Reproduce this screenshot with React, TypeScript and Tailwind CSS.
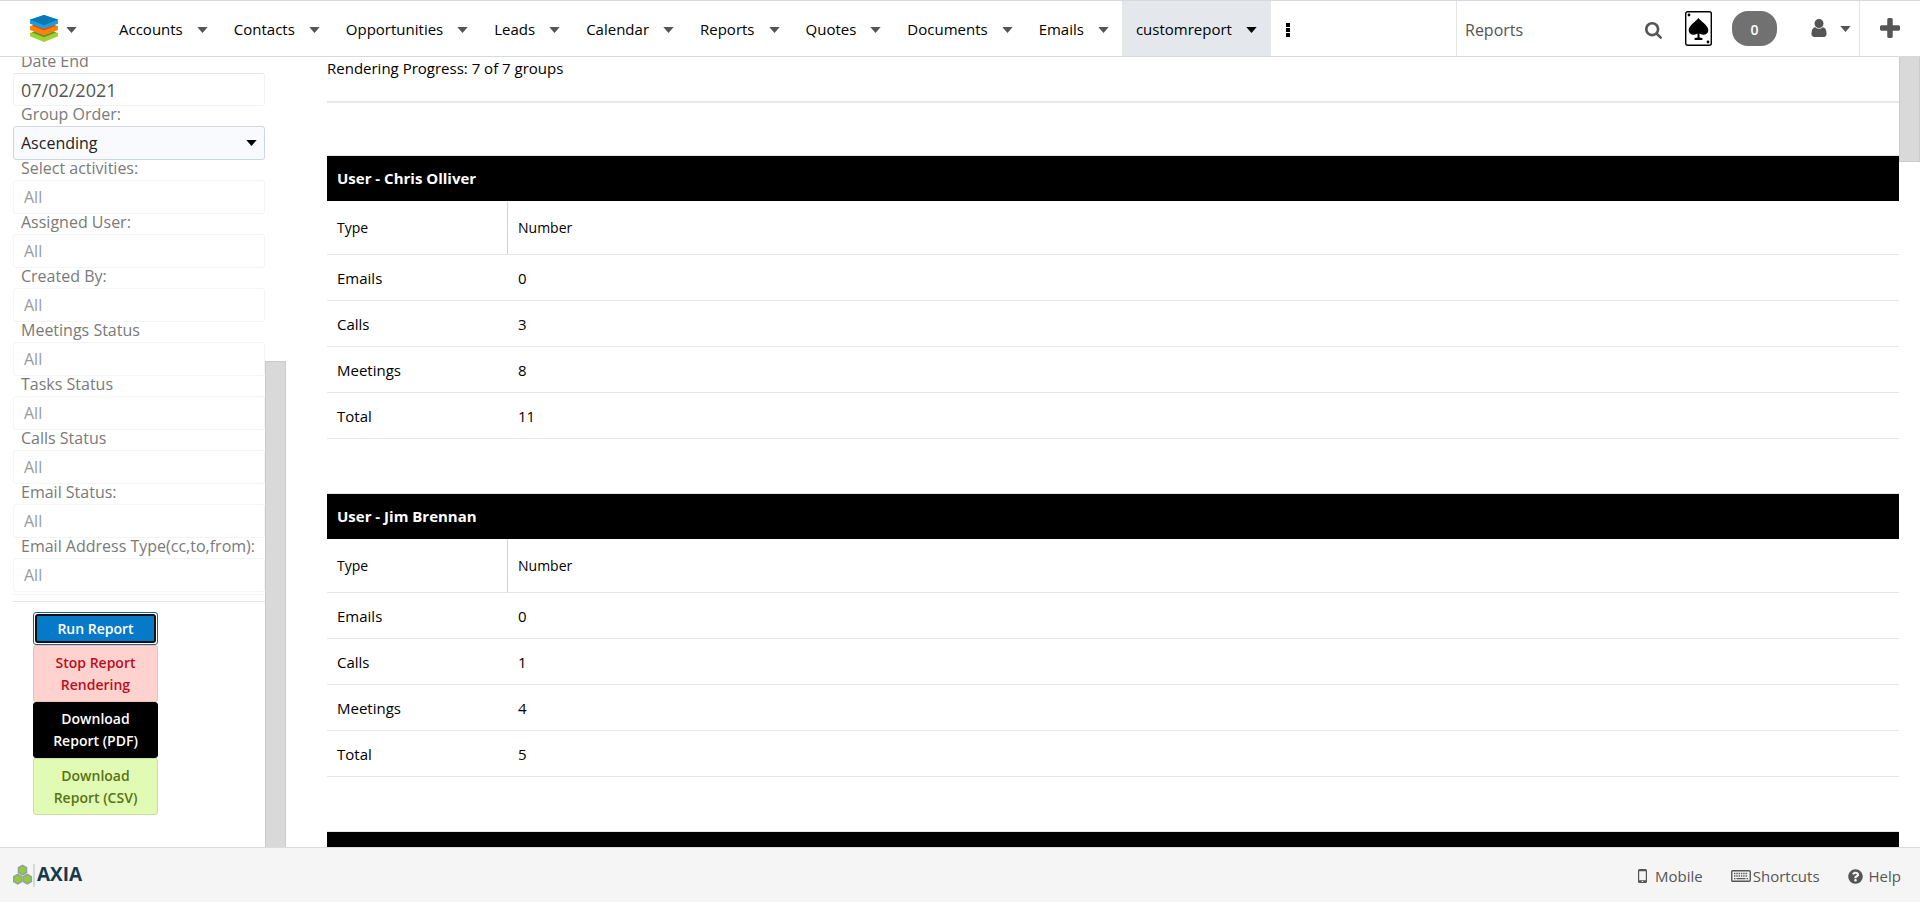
import { FaQuestionCircle } from "react-icons/fa";

const modules = ["Accounts", "Contacts", "Opportunities", "Leads", "Calendar", "Reports", "Quotes", "Documents", "Emails", "customreport"];

const filters = [
  "Select activities:",
  "Assigned User:",
  "Created By:",
  "Meetings Status",
  "Tasks Status",
  "Calls Status",
  "Email Status:",
  "Email Address Type(cc,to,from):",
];

const groups = [
  { user: "Chris Olliver", rows: [["Emails", 0], ["Calls", 3], ["Meetings", 8], ["Total", 11]] },
  { user: "Jim Brennan", rows: [["Emails", 0], ["Calls", 1], ["Meetings", 4], ["Total", 5]] },
  { user: "", rows: [] },
];

function Caret({ className = "" }: { className?: string }) {
  return (
    <svg viewBox="0 0 11 6" className={`h-[6px] w-[11px] shrink-0 ${className}`} fill="currentColor" aria-hidden="true">
      <path d="M0.3 0h10.4L5.5 6z" />
    </svg>
  );
}

function SearchIcon() {
  return (
    <svg viewBox="64 128 1664 1664" className="mt-[3px] size-[17px]" fill="currentColor" aria-hidden="true">
      <path d="M1216 832q0-185-131.500-316.500t-316.500-131.500-316.500 131.500-131.500 316.500 131.500 316.500 316.500 131.500 316.500-131.500 131.500-316.500zm512 832q0 52-38 90t-90 38q-54 0-90-38l-343-342q-179 124-399 124-143 0-273.500-55.500t-225-150-150-225-55.500-273.500 55.500-273.500 150-225 225-150 273.500-55.500 273.500 55.500 225 150 150 225 55.500 273.500q0 220-124 399l343 343q37 37 37 90z" />
    </svg>
  );
}

function UserIcon() {
  return (
    <svg viewBox="256 128 1280 1536" className="mb-[2px] h-[18px] w-4" fill="currentColor" aria-hidden="true">
      <path d="M1536 1399q0 109-62.500 187t-150.500 78h-854q-88 0-150.500-78t-62.500-187q0-85 8.500-160.500t31.500-152 58.500-131 94-89 134.500-34.500q131 128 313 128t313-128q76 0 134.500 34.500t94 89 58.500 131 31.500 152 8.500 160.500zm-256-887q0 159-112.500 271.500t-271.500 112.500-271.500-112.500-112.500-271.500 112.500-271.500 271.500-112.500 271.500 112.500 112.500 271.500z" />
    </svg>
  );
}

function PlusIcon() {
  return (
    <svg viewBox="192 128 1408 1408" className="mb-[2px] size-5" fill="currentColor" aria-hidden="true">
      <path d="M1600 736v192q0 40-28 68t-68 28h-416v416q0 40-28 68t-68 28h-192q-40 0-68-28t-28-68v-416h-416q-40 0-68-28t-28-68v-192q0-40 28-68t68-28h416v-416q0-40 28-68t68-28h192q40 0 68 28t28 68v416h416q40 0 68 28t28 68z" />
    </svg>
  );
}

function Logo() {
  return (
    <svg viewBox="0 0 28 27" className="h-[27px] w-7" aria-hidden="true">
      <path d="M0 18l14-5.500L28 18v3.300L14 27 0 21.300z" fill="#a2d033" />
      <path d="M2 17.500l12-5 12 5L14 22.300z" fill="#4e9a38" />
      <path d="M0 11.300l14-5.500 14 5.500v3.800l-14 5.400L0 15.100z" fill="#ff8200" />
      <path d="M2 10.700l12-5 12 5-12 4.700z" fill="#e4500a" />
      <path d="M0 4.500L14 0l14 4.500v4.200L14 13.800 0 8.700z" fill="#1b9fde" />
      <path d="M0 4.700L14 0l14 4.700L14 10.200z" fill="#0a78b5" />
    </svg>
  );
}

function SpadeCard() {
  return (
    <svg viewBox="0 0 27 35" className="h-[35px] w-[27px]" aria-hidden="true">
      <rect x="0.7" y="0.7" width="25.6" height="33.6" rx="2" fill="#fff" stroke="#000" strokeWidth="1.4" />
      <circle cx="4" cy="4" r="1.4" />
      <circle cx="23" cy="31" r="1.4" />
      <path d="M13.500 7c2.200 3.300 9.800 7.200 9.800 12.200 0 4.300-4.800 5.800-8.800 3.300v3.800c0 .6 3.200.4 3.200 1.700 0 .7-.5.900-1 .9h-6.400c-.5 0-1-.2-1-.9 0-1.300 3.200-1.100 3.200-1.700v-3.800c-4 2.500-8.800 1-8.800-3.300 0-5 7.600-8.900 9.800-12.200z" />
    </svg>
  );
}

function AxiaMark() {
  return (
    <svg viewBox="0 0 22 23" className="h-[23px] w-[22px]" aria-hidden="true">
      <g fill="#97cb35" stroke="#8fa3a0" strokeWidth="1.6">
        <path d="M9.500 1.500l4 2.300v4.700l-4 2.300-4-2.300V3.800z" />
        <path d="M4.700 10.500l4 2.300v4.700l-4 2.300-4-2.300v-4.700z" />
        <path d="M14.300 10.500l4 2.300v4.700l-4 2.300-4-2.300v-4.700z" />
      </g>
      <path d="M20 0h2v23h-2z" fill="#d3d9d9" />
    </svg>
  );
}

function Header() {
  return (
    <header className="flex h-[57px] shrink-0 items-stretch border-y border-t-[#d8d8de] border-b-[#d5dade] bg-white text-[15px] text-black">
      <button type="button" aria-label="Home" className="flex items-center gap-2 pr-[14px] pl-[30px] text-[#555]">
        <Logo />
        <Caret className="mt-[2px]" />
      </button>
      <nav className="flex pl-[15px]">
        {modules.map((m) => (
          <a
            key={m}
            href="#"
            className={`flex items-center gap-[14px] pt-[2px] ${m === "customreport" ? "bg-[#e4e8ec] px-[14px]" : "px-[13px]"}`}
          >
            {m}
            <Caret className={m === "customreport" ? "text-black" : "text-[#555]"} />
          </a>
        ))}
      </nav>
      <button type="button" aria-label="More modules" className="px-[15px] pt-[2px]">
        <svg viewBox="0 0 4 14" className="h-[14px] w-1" aria-hidden="true">
          <path d="M0 0h4v4H0zM0 5h4v4H0zM0 10h4v4H0z" />
        </svg>
      </button>
      <div className="ml-auto flex items-center">
        <label className="flex h-full items-center border-l border-[#e2e5e9] pl-2 text-[#555]">
          <input aria-label="Search" defaultValue="Reports" className="w-[180px] pt-[2px] text-[16px] outline-none" />
          <SearchIcon />
        </label>
        <a href="#" aria-label="Cards" className="ml-[23px]">
          <SpadeCard />
        </a>
        <button type="button" className="ml-5 h-[35px] w-[45px] rounded-2xl bg-[#717171] pt-[2px] text-[14px] font-semibold text-white">
          0
        </button>
        <button type="button" aria-label="Profile" className="flex h-full items-center gap-[13px] border-r border-[#e2e5e9] pr-2 pl-[34px] text-[#555]">
          <UserIcon />
          <Caret />
        </button>
        <button type="button" aria-label="Quick create" className="h-full px-5 text-[#555]">
          <PlusIcon />
        </button>
      </div>
    </header>
  );
}

function Sidebar() {
  const label = "block h-5 pl-2 text-[16px] leading-4 whitespace-nowrap text-[#7a7a7a]";
  const button = "block w-full rounded-[3px] border text-center text-[14px] leading-[22px] font-semibold";
  return (
    <aside className="flex w-[286px] shrink-0 overflow-hidden">
      <form className="-mt-1 min-w-0 flex-1 pl-[13px]" onSubmit={(e) => e.preventDefault()}>
        <label htmlFor="date-end" className={label}>Date End</label>
        <input id="date-end" defaultValue="07/02/2021" className="block h-[33px] w-full rounded-[3px] border border-[#f2f2f2] border-t-[#e4e4e4] px-[7px] text-[18px] text-[#555]" />
        <label htmlFor="group-order" className={label}>Group Order:</label>
        <div className="relative">
          <select id="group-order" className="block h-[34px] w-full appearance-none rounded-[3px] border border-[#ced7df] bg-[#f9fafe] px-[7px] text-[16px] text-[#222]">
            <option>Ascending</option>
            <option>Descending</option>
          </select>
          <Caret className="pointer-events-none absolute top-[14px] right-2 text-black" />
        </div>
        {filters.map((f) => (
          <div key={f}>
            <label htmlFor={f} className={label}>{f}</label>
            <input id={f} defaultValue="All" className="block h-[34px] w-full rounded-[3px] border border-[#f4f4f4] px-[10px] text-[16px] text-[#9a9a9a]" />
          </div>
        ))}
        <div className="mt-[2px] h-2 border-y border-t-[#f4f4f4] border-b-[#e4e4e4]" />
        <div className="mt-[10px] ml-5 w-[125px]">
          <button type="submit" className={`${button} h-[33px] border-[#176299] bg-white p-px text-white`}>
            <span className="flex h-full items-center justify-center rounded-[3px] border-2 border-[#101010] bg-[#0679c8]">Run Report</span>
          </button>
          <button type="button" className={`${button} border-[#e9bdbb] bg-[#ffd2cf] px-4 pt-[6px] pb-[5px] text-[#bb0e1b]`}>Stop Report Rendering</button>
          <button type="button" className={`${button} border-black bg-black px-[14px] py-[5px] text-white`}>Download Report (PDF)</button>
          <button type="button" className={`${button} border-[#cbe09c] bg-[#e2fbb4] px-[14px] pt-[6px] pb-[5px] text-[#587312]`}>Download Report (CSV)</button>
        </div>
      </form>
      <div className="flex w-[21px] shrink-0 flex-col justify-end">
        <div className="h-[61.500%] border border-b-0 border-[#cbcbcb] bg-[#d9d9d9]" />
      </div>
    </aside>
  );
}

function Report() {
  return (
    <main className="ml-[41px] min-w-0 flex-1 overflow-hidden text-[15px] text-black">
      <p className="h-[46px] border-b-2 border-[#e7e7e7] leading-[22px]">Rendering Progress: 7 of 7 groups</p>
      <div className="flex flex-col gap-[54px] pt-[52px]">
        {groups.map((g) => (
          <table key={g.user} className="w-full table-fixed border-separate border-spacing-0 text-left">
            <colgroup>
              <col className="w-[181px]" />
              <col />
            </colgroup>
            <thead>
              <tr>
                <th colSpan={2} className="h-[46px] border-t border-[#e7e7e7] bg-black bg-clip-padding pl-[10px] text-[15px] font-bold text-white">
                  {g.user && `User - ${g.user}`}
                </th>
              </tr>
              {g.rows.length > 0 && (
                <tr className="text-[14px]">
                  <th className="h-[54px] border-r border-b border-[#e7e7e7] border-r-[#d0d5da] pb-px pl-[10px] font-normal">Type</th>
                  <th className="border-b border-[#e7e7e7] pb-px pl-[10px] font-normal">Number</th>
                </tr>
              )}
            </thead>
            <tbody>
              {g.rows.map(([type, count]) => (
                <tr key={type}>
                  <td className="h-[46px] border-b border-[#e7e7e7] pt-[2px] pl-[10px]">{type}</td>
                  <td className="border-b border-[#e7e7e7] pt-[2px] pl-[10px]">{count}</td>
                </tr>
              ))}
            </tbody>
          </table>
        ))}
      </div>
    </main>
  );
}

function Footer() {
  return (
    <footer className="flex h-[55px] shrink-0 items-center justify-between border-t border-[#dcdcdc] bg-[#f5f5f5] pr-[19px] pl-[13px] text-[15px] text-[#555]">
      <a href="#" className="flex items-center gap-[2px] text-[19px] leading-5 font-bold text-[#153b4b]">
        <AxiaMark />
        <span className="pb-[2px]">AXIA</span>
      </a>
      <div className="flex gap-7 pt-[2px]">
        <button type="button" className="flex items-center gap-2">
          <svg viewBox="0 0 9 14" className="h-[14px] w-[9px]" aria-hidden="true">
            <path fillRule="evenodd" fill="currentColor" d="M1.500 0h6A1.500 1.500 0 0 1 9 1.500v11A1.500 1.500 0 0 1 7.500 14h-6A1.500 1.500 0 0 1 0 12.500v-11A1.500 1.500 0 0 1 1.500 0zM1.200 2.300v8.900h6.600V2.300zM3.800 12v1h1.400v-1z" />
          </svg>
          Mobile
        </button>
        <button type="button" className="flex items-center gap-[2px]">
          <svg viewBox="0 0 20 12" className="h-3 w-5" aria-hidden="true">
            <rect x="0.750" y="0.750" width="18.500" height="10.500" rx="1" fill="none" stroke="currentColor" strokeWidth="1.400" />
            <path d="M3 3.500h14M3 6h14" stroke="currentColor" strokeWidth="1.300" strokeDasharray="1.400 0.900" />
            <path d="M3 8.600h1.500M5.500 8.600h9M15.500 8.600h1.500" stroke="currentColor" strokeWidth="1.300" />
          </svg>
          Shortcuts
        </button>
        <button type="button" className="flex items-center gap-[6px]">
          <FaQuestionCircle className="size-[15px]" />
          Help
        </button>
      </div>
    </footer>
  );
}

export default function App() {
  return (
    <div className="flex h-screen flex-col overflow-hidden bg-white font-['Open_Sans',sans-serif]">
      <Header />
      <div className="flex min-h-0 flex-1">
        <Sidebar />
        <Report />
        <div className="w-[21px] shrink-0">
          <div className="h-[13.300%] border border-t-0 border-[#cbcbcb] bg-[#d9d9d9]" />
        </div>
      </div>
      <Footer />
    </div>
  );
}
